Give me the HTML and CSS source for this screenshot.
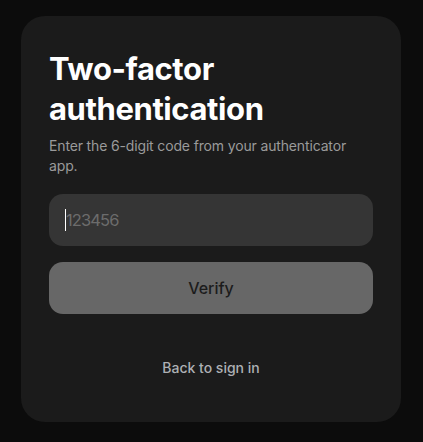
FILE: index.html
```html
<!DOCTYPE html>
<html lang="en">
<head>
<meta charset="utf-8">
<title>Two-factor authentication</title>
<link rel="stylesheet" href="styles.css">
</head>
<body>
<main class="page">
  <section class="card">
    <h1 class="title">Two-factor authentication</h1>
    <p class="subtitle">Enter the 6-digit code from your authenticator app.</p>
    <div class="field"><span class="caret"></span><span class="placeholder">123456</span></div>
    <button class="verify" type="button">Verify</button>
    <a class="back" href="#">Back to sign in</a>
  </section>
</main>
</body>
</html>
```

FILE: styles.css
```css
html, body {
  margin: 0;
  padding: 0;
  background: #0c0c0c;
}
body {
  font-family: Inter, "Noto Sans", sans-serif;
  width: 423px;
  height: 442px;
  overflow: hidden;
}
.page {
  padding: 16px 22px 20px 21px;
}
.card {
  background: #1b1b1b;
  border-radius: 24px;
  padding: 33px 28px 32px;
  display: flex;
  flex-direction: column;
  height: 341px;
}
.title {
  margin: 0;
  color: #ffffff;
  font-size: 31px;
  line-height: 40px;
  font-weight: 700;
  letter-spacing: -0.4px;
  width: 260px;
}
.subtitle {
  margin: 7px 0 0;
  color: #9a9a9a;
  font-size: 14px;
  line-height: 20px;
  letter-spacing: -0.15px;
}
.field {
  margin-top: 18px;
  height: 52px;
  background: #353535;
  border-radius: 14px;
  display: flex;
  align-items: center;
  padding-left: 16px;
}
.caret {
  width: 1px;
  height: 22px;
  background: #ffffff;
}
.placeholder {
  color: #6c6c6c;
  font-size: 16.5px;
  letter-spacing: -0.9px;
}
.verify {
  margin-top: 16px;
  height: 52px;
  border: 0;
  border-radius: 14px;
  background: #676767;
  color: #1c1c1c;
  font-family: inherit;
  font-size: 16px;
  font-weight: 500;
}
.back {
  margin-top: 44px;
  align-self: center;
  color: #adb0b4;
  font-size: 14px;
  line-height: 20px;
  font-weight: 500;
  text-decoration: none;
}
```
